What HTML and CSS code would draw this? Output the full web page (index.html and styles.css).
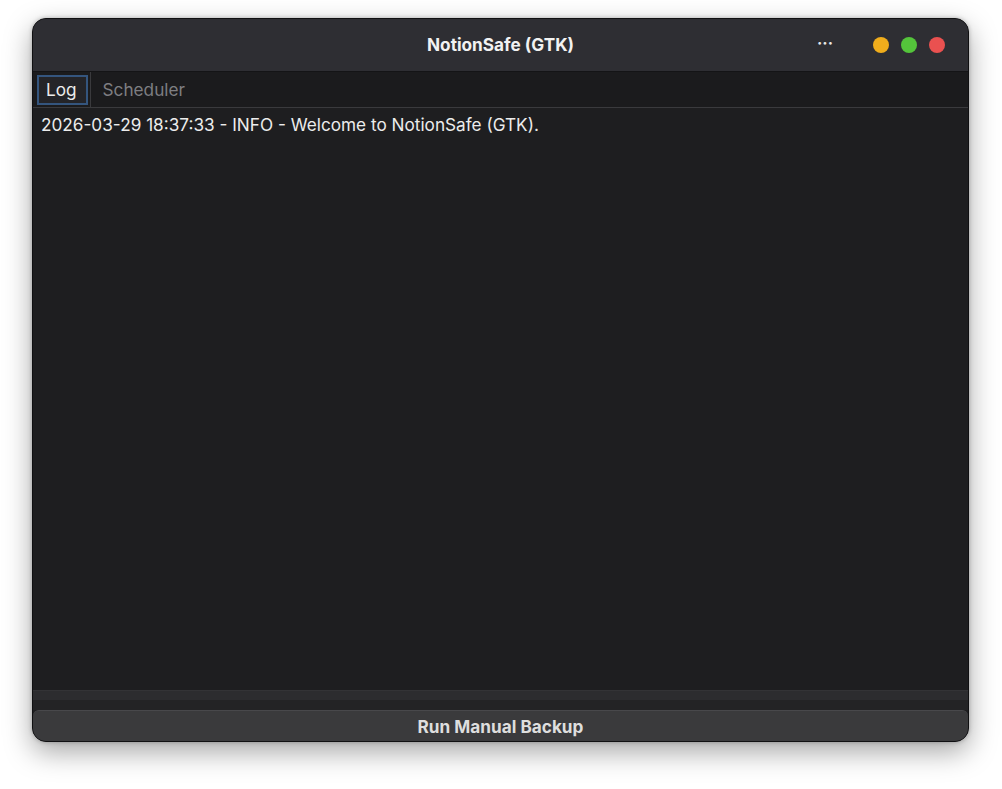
FILE: index.html
```html
<!DOCTYPE html>
<html>
<head>
<meta charset="UTF-8">
<title>NotionSafe (GTK)</title>
<link rel="stylesheet" href="styles.css">
</head>
<body>

<div class="window">
    <div class="titlebar">
        <div class="title">NotionSafe (GTK)</div>
        <div class="controls">
            <span class="menu">&middot;&middot;&middot;</span>
            <span class="dot dot-yellow"></span>
            <span class="dot dot-green"></span>
            <span class="dot dot-red"></span>
        </div>
    </div>

    <div class="tabs">
        <div class="tab tab-active"><span>Log</span></div>
        <div class="tab">Scheduler</div>
    </div>

    <div class="log">
        <p>2026-03-29 18:37:33 - INFO - Welcome to NotionSafe (GTK).</p>
    </div>

    <div class="scrollbar"></div>
    <div class="spacer"></div>

    <button class="run-button">Run Manual Backup</button>
</div>

</body>
</html>
```

FILE: styles.css
```css
body, html {
    margin: 0;
    padding: 0;
    background-color: #ffffff;
    font-family: Inter, "Noto Sans", sans-serif;
}

body {
    padding: 18px 0 0 32px;
    height: 789px;
    box-sizing: border-box;
}

.window {
    width: 937px;
    height: 724px;
    background-color: #1e1e20;
    border: 1px solid #101012;
    box-sizing: border-box;
    border-radius: 14px;
    overflow: hidden;
    display: flex;
    flex-direction: column;
    box-shadow: 0 10px 28px rgba(0, 0, 0, 0.35), 0 0 4px rgba(0, 0, 0, 0.25);
}

.titlebar {
    height: 52px;
    background-color: #2e2e33;
    border-bottom: 1px solid #141416;
    display: flex;
    align-items: center;
    justify-content: center;
    position: relative;
    flex-shrink: 0;
}

.title {
    color: #f2f2f2;
    font-weight: 700;
    font-size: 17.2px;
    margin-top: -2px;
}

.controls {
    position: absolute;
    right: 23px;
    top: 0;
    height: 100%;
    display: flex;
    align-items: center;
    gap: 12px;
}

.menu {
    color: #e8e8e8;
    font-size: 16px;
    font-weight: 700;
    margin-right: 28px;
    margin-top: -4px;
}

.dot {
    width: 16px;
    height: 16px;
    border-radius: 50%;
    margin-top: -1px;
}

.dot-yellow { background-color: #f0ad1c; }
.dot-green { background-color: #54c43b; }
.dot-red { background-color: #ea5150; }

.tabs {
    height: 35px;
    background-color: #1b1b1d;
    border-bottom: 1px solid #3a3a3d;
    display: flex;
    align-items: stretch;
    flex-shrink: 0;
}

.tab {
    color: #7e7e82;
    font-size: 17.2px;
    display: flex;
    align-items: center;
    padding: 0 12px;
}

.tab-active {
    padding: 0 2px 0 4px;
    border-right: 1px solid #3a3a3d;
}

.tab-active span {
    color: #ececec;
    border: 2px solid #34557e;
    background-color: #242428;
    padding: 2px 9px 3px 7px;
}

.log {
    flex: 1;
    padding: 6px 8px;
    background-color: #1e1e20;
}

.log p {
    margin: 0;
    color: #ececec;
    font-size: 17.2px;
}

.scrollbar {
    height: 9px;
    background-color: #2c2c2f;
    border-top: 1px solid #333336;
    flex-shrink: 0;
}

.spacer {
    height: 10px;
    background-color: #232325;
    flex-shrink: 0;
}

.run-button {
    height: 31px;
    margin: 0;
    border: none;
    border-top: 1px solid #48484b;
    border-radius: 6px 6px 12px 12px;
    background-color: #3a3a3c;
    color: #dedede;
    font-family: Inter, "Noto Sans", sans-serif;
    font-weight: 700;
    font-size: 17.2px;
    flex-shrink: 0;
}
```
